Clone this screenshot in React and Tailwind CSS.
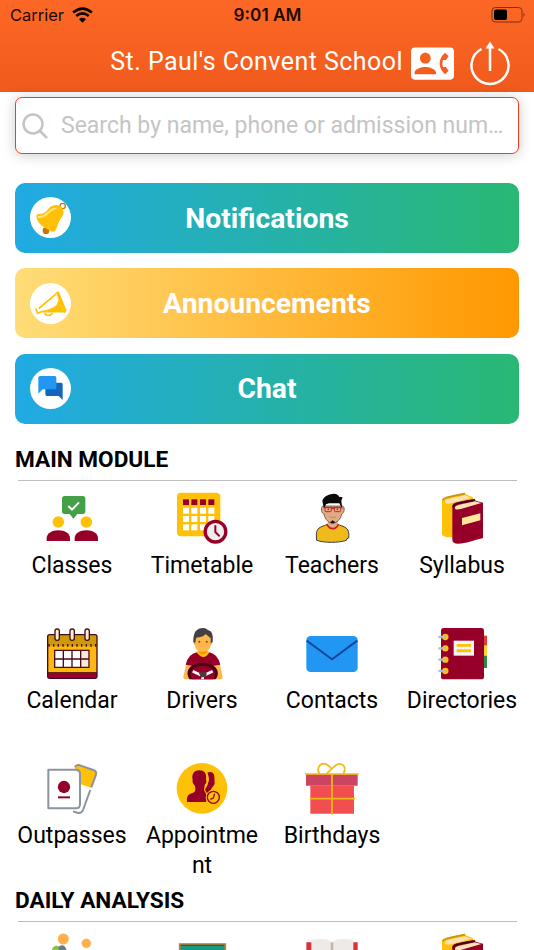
import { MdContactPhone } from "react-icons/md";

const Icon = ({ children }) => (
  <svg viewBox="0 0 168 168" className="block h-14 w-14 shrink-0">
    {children}
  </svg>
);

const ClassesIcon = () => (
  <Icon>
    <path
      d="M62 18h54a8 8 0 0 1 8 8v38a8 8 0 0 1-8 8h-16L88 86 77 72H62a8 8 0 0 1-8-8V26a8 8 0 0 1 8-8z"
      fill="#43a047"
    />
    <path d="M73 48l11 11 21-22" fill="none" stroke="#fff" strokeWidth="6" />
    <circle cx="43" cy="96" r="17.5" fill="#ffc107" />
    <circle cx="127" cy="96" r="17.5" fill="#ffc107" />
    <path d="M8 153v-8c0-15 15-24 35-24s35 9 35 24v8z" fill="#960028" />
    <path d="M92 153v-8c0-15 15-24 35-24s35 9 35 24v8z" fill="#960028" />
  </Icon>
);

const TimetableIcon = () => (
  <Icon>
    <rect x="9" y="8" width="130" height="131" rx="12" fill="#ffc107" />
    {[27, 52, 78, 103].map((x) => (
      <g key={x}>
        <rect x={x} y="28" width="18" height="17" fill="#960028" />
        <rect x={x} y="53" width="18" height="18" fill="#fff" />
        <rect x={x} y="78" width="18" height="18" fill="#fff" />
        <rect x={x} y="103" width="18" height="18" fill="#fff" />
      </g>
    ))}
    <circle cx="124.500" cy="125" r="31" fill="#eee" stroke="#960028" strokeWidth="10" />
    <path d="M124 106v20l13 13" fill="none" stroke="#960028" strokeWidth="6" />
  </Icon>
);

const TeacherIcon = () => (
  <Icon>
    <path
      d="M38 151c-3-28 1-36 17-42 8-3 14-5 18-8h26c4 3 10 5 18 8 15 6 19 14 17 35l-5 2-2 5c-24 8-66 8-89 0z"
      fill="#f0bb1a"
      stroke="#3a3a3a"
      strokeWidth="3"
    />
    <path d="M71 102c5 16 25 16 30 0v-12H72z" fill="#e3ab83" />
    <path d="M69 103c8 17 27 17 34 0" fill="none" stroke="#d01c2c" strokeWidth="5" />
    <path
      d="M59 48c-9-1-9 22 1 24 3 17 14 27 26 27s24-10 27-27c10-3 10-25 1-24z"
      fill="#e3ab83"
      stroke="#3a3029"
      strokeWidth="2"
    />
    <path
      d="M55 33c2-11 15-19 31-21 11-2 17 4 19 8l11 2-4 10 3 26-9-18H75l-9 3-6 14z"
      fill="#0a0a0a"
    />
    <g fill="none" stroke="#c8202f" strokeWidth="3">
      <rect x="63" y="52" width="19" height="13" rx="3" />
      <rect x="91" y="52" width="19" height="13" rx="3" />
      <path d="M59 53h55M82 56h9" />
    </g>
    <circle cx="73" cy="58" r="2.500" fill="#6b3d26" />
    <circle cx="100" cy="58" r="2.500" fill="#6b3d26" />
    <path d="M76 80q10 5 21 0" fill="none" stroke="#b57f5e" strokeWidth="2.500" />
    <path d="M79 95l4-1 3-4 3 4 4 1-2 5H81z" fill="#111" />
  </Icon>
);

const BooksIcon = () => (
  <Icon>
    <path d="M24 30c2-7 12-8 68-22l3 5 22 9v118l-62 2c-20 0-31-3-31-11z" fill="#ffc107" />
    <path d="M33 36c0-9 12-9 59-20l20 7-58 16c-9 2-21 4-21-3z" fill="#ffe2b3" />
    <path d="M26 31c2-8 10-9 67-20" fill="none" stroke="#c99508" strokeWidth="5" />
    <path
      d="M55 48c2-10 10-11 67-21l3 5 22 6v106c-28 7-52 17-74 17-12 0-18-4-18-11z"
      fill="#960028"
    />
    <path d="M63 54c0-9 12-9 59-20l20 5-62 18c-8 2-17 3-17-3z" fill="#ffe2b3" />
    <path d="M57 52c1-11 9-12 66-22" fill="none" stroke="#3e0713" strokeWidth="5" />
    <path d="M84 84l55-14v21l-55 15z" fill="#ffe69a" />
  </Icon>
);

const CalendarIcon = () => (
  <Icon>
    <rect x="11" y="29" width="148" height="131" rx="6" fill="#fdb912" />
    <path d="M11 64V35q0-6 6-6h136q6 0 6 6v29z" fill="#cc9a06" />
    <path d="M11 144h148v10q0 6-6 6H17q-6 0-6-6z" fill="#9c0030" />
    <path d="M13 61h146" stroke="#4a0b18" strokeWidth="8" strokeDasharray="4 10" />
    <path d="M31 75h105v53H31z" fill="#fff" />
    <path d="M112 75h24v53h-24z" fill="#f7ead8" />
    <path
      d="M32 76h103v51H32zM32 102h103M58 76v51M84 76v51M110 76v51"
      fill="none"
      stroke="#4a0b18"
      strokeWidth="4"
    />
    <path d="M11 143h148" stroke="#4a0b18" strokeWidth="3" />
    <rect x="11" y="29" width="148" height="131" rx="6" fill="none" stroke="#4a0b18" strokeWidth="4" />
    {[33, 78, 123].map((x) => (
      <rect
        key={x}
        x={x}
        y="12"
        width="13"
        height="34"
        rx="6"
        fill="#fff0d2"
        stroke="#4a0b18"
        strokeWidth="4"
      />
    ))}
  </Icon>
);

const DriverIcon = () => (
  <Icon>
    <path d="M36 119l-8 37q0 7 9 7h100q9 0 9-7l-8-37z" fill="#ffb74d" />
    <path d="M68 82q18 10 38 0 25 5 33 37l-20 3v20H54v-20l-19-3q8-32 33-37z" fill="#960028" />
    <path d="M67 81l8-6h23l9 6q-18 30-40 0z" fill="#ffc107" />
    <path d="M75 70h24v12q-12 14-24 0z" fill="#ff9800" />
    <path
      d="M63 34v14c-7 0-5 11 0 13 1 13 11 19 24 19s22-6 23-19c6-2 7-13 0-13V34l-10-9-25 5z"
      fill="#ffb74d"
    />
    <path
      d="M58 51c-1-29 9-42 30-42 7 0 11 3 13 6 12 2 17 12 15 36l-6 4V40l-15-13c-8 9-20 10-28 11l-4 17z"
      fill="#424242"
    />
    <circle cx="76" cy="50" r="3" fill="#784719" />
    <circle cx="98" cy="50" r="3" fill="#784719" />
    <path d="M47 163c-18-26 4-50 39-50s57 24 39 50z" fill="#4a0011" />
    <path d="M54 163c-13-22 4-40 32-40s45 18 32 40z" fill="#960028" />
    <path d="M56 139l24 11M116 139l-24 11M86 152v11" stroke="#fff" strokeWidth="8" />
    <path d="M75 145l7-3h9l8 4-5 11H81z" fill="#424242" />
  </Icon>
);

const ContactsIcon = () => (
  <Icon>
    <rect x="7" y="33" width="154" height="108" rx="13" fill="#2196f3" />
    <path d="M8 47l76 56 76-56" fill="none" stroke="#0d47a1" strokeWidth="6" />
  </Icon>
);

const DirectoriesIcon = () => (
  <Icon>
    <path d="M148 32h11v30h-11z" fill="#e53935" />
    <path d="M148 62h11v30h-11z" fill="#fdd835" />
    <path d="M148 92h11v37h-11z" fill="#2e8b3d" />
    <rect x="21" y="9" width="129" height="154" rx="8" fill="#960028" />
    <path d="M59 47h61v45H59z" fill="#f5f5f5" />
    <path d="M68 57h43v8H68zM68 73h43v9H68z" fill="#ffc107" />
    {[36, 70, 104, 138].map((y) => (
      <g key={y}>
        <circle cx="34" cy={y} r="9.500" fill="#ffc107" />
        <path d={`M16 ${y}h17`} stroke="#b0bec5" strokeWidth="7" strokeLinecap="round" />
      </g>
    ))}
  </Icon>
);

const OutpassesIcon = () => (
  <Icon>
    <path d="M92 20q5-8 16-4l40 14q11 4 8 14l-14 39-34-11z" fill="#ffc107" />
    <g fill="none" stroke="#8b939f" strokeWidth="6" strokeLinejoin="round">
      <path d="M93 21q4-8 15-5l40 14q11 4 8 14l-14 38M139 90l-22 60q-4 10-14 9l-16-5" />
      <path d="M13 29h84q11 2 11 12v91q0 13-11 13H13z" fill="#fff" />
    </g>
    <circle cx="60" cy="81" r="18.500" fill="#960028" />
    <path d="M42 112h36" stroke="#960028" strokeWidth="6" />
  </Icon>
);

const AppointmentIcon = () => (
  <Icon>
    <circle cx="84" cy="85" r="76" fill="#ffc107" />
    <path
      d="M100 38c5-4 21-4 21 12 1 9 0 14 1 21-2 7-8 9-10 16l-12 15-7-13c2-6 8-10 9-19 5-9 3-22-2-32z"
      fill="#960028"
    />
    <path
      d="M56 60c-4-20 6-29 20-29s23 8 20 29c3 3 1 11-3 13-2 8-3 13-3 18 4 7 9 11 7 35H39c-2-23 7-22 22-30 4-2 4-11 1-20-5-3-8-12-6-16z"
      fill="#960028"
    />
    <circle cx="118" cy="112" r="23" fill="#ffc107" />
    <circle cx="118" cy="112" r="18" fill="none" stroke="#960028" strokeWidth="4" />
    <path d="M122 101l-4 13-9 4" fill="none" stroke="#960028" strokeWidth="4" />
  </Icon>
);

const BirthdaysIcon = () => (
  <Icon>
    <path d="M6 43h155v34H6z" fill="#cb4460" />
    <path d="M19 77h131v84H19z" fill="#f14e50" />
    <g fill="none" stroke="#f0bc10" strokeWidth="5">
      <path d="M3 42h161M84 42v122M17 116h136" />
      <path d="M47 41C36 28 46 11 59 11c10 0 16 7 23 14M68 41l22-21c8-8 14-9 19-8 13 2 18 16 9 29" />
    </g>
  </Icon>
);

const StudentsIcon = () => (
  <Icon>
    <circle cx="58" cy="24" r="16.500" fill="#ffb04d" />
    <circle cx="127" cy="37" r="14" fill="#ffb04d" />
    <path d="M21 75c0-20 6-31 17-31 8 0 12 5 12 12v19z" fill="#8bc34a" />
    <path d="M43 75V55q1-12 12-12 9 0 14 18v14z" fill="#607d8b" />
  </Icon>
);

const BoardIcon = () => (
  <Icon>
    <rect x="17" y="39" width="137" height="100" fill="#17997f" stroke="#d97a24" strokeWidth="5" />
    <path d="M20 43h131" stroke="#0b6a58" strokeWidth="4" />
  </Icon>
);

const OpenBookIcon = () => (
  <Icon>
    <path d="M7 34h154v100H7z" fill="#d9323b" />
    <path d="M22 27q46-9 62 7 16-16 64-7v100H22z" fill="#eeeae8" />
    <path d="M80 34h8v90h-8z" fill="#c2b3ab" />
  </Icon>
);

const BellIcon = () => (
  <>
    <circle cx="48" cy="101" r="10" fill="#c77700" />
    <circle cx="98" cy="27" r="8" fill="none" stroke="#c77700" strokeWidth="4" />
    <path
      d="M19 57c0-5 5-7 12-7 20 0 22-19 36-24 14-4 18-1 23 2 6 4 12 11 11 21-1 8-10 16-13 23-6 12-6 20-13 30-5 6-14-1-25-7-15-8-29-18-31-38z"
      fill="#ffc107"
    />
    <path d="M24 60c28 2 31-24 55-26" fill="none" stroke="#ffe57f" strokeWidth="6" />
  </>
);

const MegaphoneIcon = () => (
  <g fill="none" stroke="#ffc107" strokeWidth="5" strokeLinecap="round" strokeLinejoin="round">
    <path d="M28 75l49-41M79 30l6-2 22 55-3 4-21-52M18 78l5 13 11-5h66" />
    <path d="M45 91c1 8 19 8 21 0" />
    <path d="M87 51l13 34H36q36-8 45-20z" fill="#ffc107" strokeWidth="2" />
  </g>
);

const ChatIcon = () => (
  <>
    <path d="M50 44h43q5 0 5 5v47L86 84H51q-5 0-5-5V49q0-5 4-5z" fill="#1565c0" />
    <path d="M30 24h44q5 0 5 5v30q0 5-5 5H38L25 77V29q0-5 5-5z" fill="#2196f3" />
  </>
);

const actions = [
  { label: "Notifications", icon: BellIcon, color: "from-[#21aae4] to-[#29b873]" },
  { label: "Announcements", icon: MegaphoneIcon, color: "from-[#ffdd78] to-[#ff9800]" },
  { label: "Chat", icon: ChatIcon, color: "from-[#21aae4] to-[#29b873]" },
];

const mainModules = [
  { label: "Classes", icon: ClassesIcon },
  { label: "Timetable", icon: TimetableIcon },
  { label: "Teachers", icon: TeacherIcon },
  { label: "Syllabus", icon: BooksIcon },
  { label: "Calendar", icon: CalendarIcon },
  { label: "Drivers", icon: DriverIcon },
  { label: "Contacts", icon: ContactsIcon },
  { label: "Directories", icon: DirectoriesIcon },
  { label: "Outpasses", icon: OutpassesIcon },
  { label: "Appointment", icon: AppointmentIcon },
  { label: "Birthdays", icon: BirthdaysIcon },
];

const dailyIcons = [StudentsIcon, BoardIcon, OpenBookIcon, BooksIcon];

const SectionTitle = ({ children }) => (
  <div className="px-[15px]">
    <h2 className="h-10 text-[22.6px] leading-10 font-bold text-black">{children}</h2>
    <div className="mr-0.5 ml-[3px] h-px bg-[#bdbdbd]"></div>
  </div>
);

const App = () => {
  return (
    <div className="h-[950px] w-[534px] overflow-hidden bg-white font-['Roboto',sans-serif]">
      {/* Header */}
      <header className="h-[91.5px] bg-linear-to-b/srgb from-[#fd6826] to-[#f05a1c]">
        <div className="flex h-[30px] items-center justify-between pr-[9px] pl-2.5 font-['Inter',sans-serif] text-[16.5px] text-[#1d0b04]">
          <div className="flex w-24 items-center gap-2">
            <span>Carrier</span>
            <svg viewBox="0 0 60 46" className="h-4 w-[21px]" fill="none" stroke="#0d0500">
              <path d="M3 16q27-23 54 0M12 26q18-15 36 0" strokeWidth="7.500" />
              <path d="M20 35q10-8 20 0L30 45z" fill="#0d0500" stroke="none" />
            </svg>
          </div>
          <span className="text-[17.2px] font-semibold">9:01 AM</span>
          <div className="flex w-24 justify-end">
            <svg viewBox="0 0 34 16" className="h-4 w-[34px]">
              <rect x="1" y="0.500" width="30" height="14.500" rx="3.500" fill="none" stroke="#7d3110" />
              <rect x="3" y="2.500" width="13" height="10.500" rx="2" fill="#000" />
              <path d="M32.500 5.500q2 2 0 5z" fill="#7d3110" />
            </svg>
          </div>
        </div>
        <div className="flex h-[61px] items-center justify-end pr-[23px]">
          <h1 className="mt-0.5 text-[25px] tracking-[0.45px] text-white">St. Paul's Convent School</h1>
          <MdContactPhone className="mt-1.5 ml-2 h-[43px] w-[43px] text-white" />
          <svg
            viewBox="0 0 42 46"
            className="mt-1 ml-[15px] h-[46px] w-[42px]"
            fill="none"
            stroke="#fff"
            strokeWidth="2.500"
          >
            <path d="M12.500 9a18.500 18.500 0 1 0 17 0M21 7v24" />
            <path d="M21 1.500l4.500 7h-9z" fill="#fff" stroke="none" />
          </svg>
        </div>
      </header>

      {/* Search */}
      <div className="px-[15px] pt-[5.5px]">
        <div className="flex h-[57px] items-center rounded-[7px] border border-[#f23c1a] bg-white pl-1.5 shadow-[0_1px_14px_rgba(0,0,0,0.2)]">
          <svg
            viewBox="0 0 26 26"
            className="h-[26px] w-[26px] shrink-0"
            fill="none"
            stroke="#c4c4c4"
            strokeWidth="2.500"
          >
            <circle cx="11" cy="11" r="9.500" />
            <path d="M17.500 17.500l7.500 7.500" />
          </svg>
          <span className="mt-0.5 ml-[13px] text-[23px] whitespace-nowrap text-[#c4c4c4]">
            Search by name, phone or admission num…
          </span>
        </div>
      </div>

      {/* Quick actions */}
      <div className="mt-[28.8px] flex flex-col gap-[15.4px] px-[15px]">
        {actions.map(({ label, icon: ActionIcon, color }) => (
          <button
            key={label}
            className={`grid h-[70px] grid-cols-[41px_1fr_41px] items-center rounded-[10px] bg-linear-to-r/srgb px-[15px] ${color}`}
          >
            <svg viewBox="0 0 123 123" className="h-[41px] w-[41px] rounded-full bg-white">
              <ActionIcon />
            </svg>
            <span className="pt-0.5 text-[28.3px] font-bold text-white">{label}</span>
          </button>
        ))}
      </div>

      {/* Main module */}
      <div className="mt-[16.4px]">
        <SectionTitle>MAIN MODULE</SectionTitle>
        <div className="mt-[9px] grid auto-rows-[135px] grid-cols-4 px-[7px]">
          {mainModules.map(({ label, icon: ModuleIcon }) => (
            <div key={label} className="flex flex-col items-center">
              <ModuleIcon />
              <span className="mt-[5px] w-[114px] text-center text-[23px] leading-[30px] break-all text-black">
                {label}
              </span>
            </div>
          ))}
        </div>
      </div>

      {/* Daily analysis */}
      <div className="-mt-[14px]">
        <SectionTitle>DAILY ANALYSIS</SectionTitle>
        <div className="mt-[9px] grid grid-cols-4 justify-items-center px-[7px]">
          {dailyIcons.map((DailyIcon, i) => (
            <DailyIcon key={i} />
          ))}
        </div>
      </div>
    </div>
  );
};

export default App;
